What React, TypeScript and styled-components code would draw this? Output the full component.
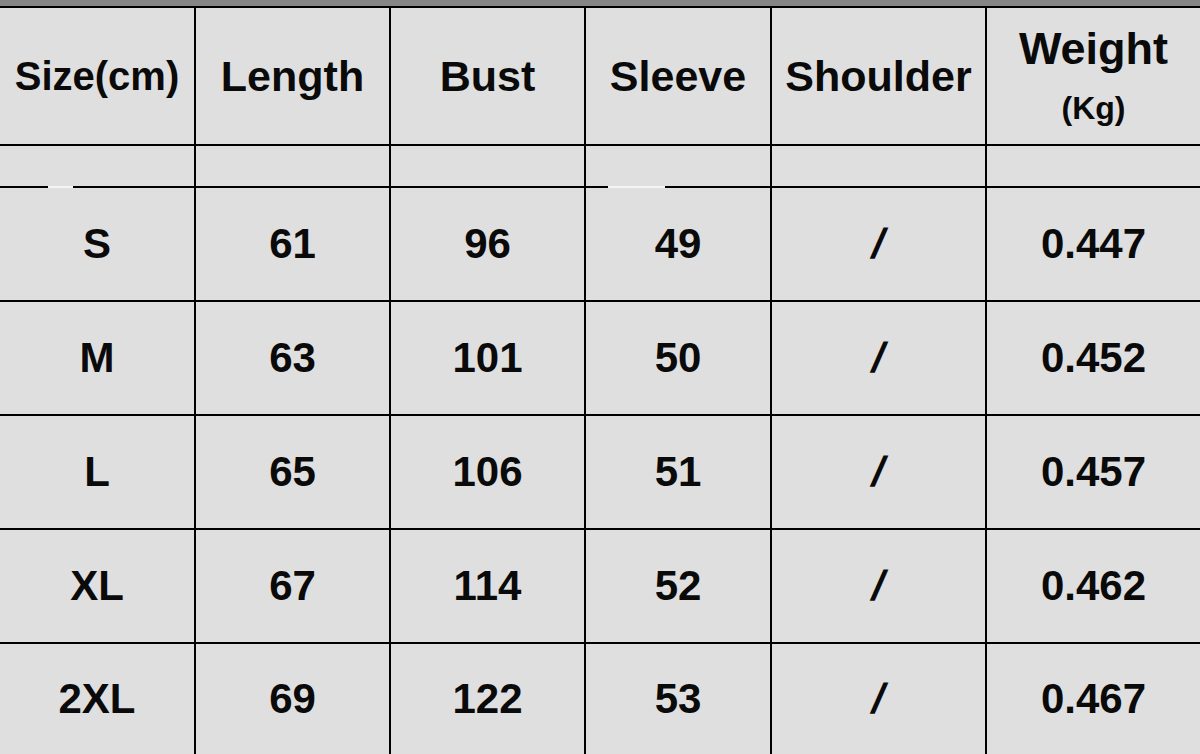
import React from "react";
import styled, { createGlobalStyle } from "styled-components";

const Global = createGlobalStyle`
  html, body { margin: 0; padding: 0; background: #dfdfdf; }
  body { font-family: "Liberation Sans", Arial, sans-serif; }
`;

const Sheet = styled.div`
  position: relative;
  width: 1200px;
  height: 754px;
  overflow: hidden;
  background: #dfdfdf;
  display: flex;
  flex-direction: column;
`;

const TopBand = styled.div`
  height: 6px;
  background: #868686;
  border-bottom: 2px solid #000;
  flex: none;
`;

const Grid = styled.div`
  flex: 1;
  display: grid;
  grid-template-columns: 194px 193px 193px 184px 213px 1fr;
  grid-template-rows: 136px 40px 112px 112px 112px 112px 1fr;
  gap: 2px;
  background: #000;
`;

const Cell = styled.div<{ $size?: number }>`
  background: #dfdfdf;
  display: flex;
  flex-direction: column;
  align-items: center;
  justify-content: center;
  color: #0a0a0a;
  font-family: "Liberation Sans", Arial, sans-serif;
  font-weight: 700;
  font-size: ${(p) => p.$size ?? 43}px;
  line-height: 1;
`;

const Main = styled.span`
  font-size: 45px;
  line-height: 1;
  transform: translateY(-3px);
`;

const Unit = styled.span`
  font-size: 32px;
  line-height: 1;
  margin-top: 18px;
`;

const Slash = styled.span`
  display: inline-block;
  transform: skewX(-14deg);
`;

const Gap = styled.div<{ $x: number; $w: number }>`
  position: absolute;
  top: 186px;
  left: ${(p) => p.$x}px;
  width: ${(p) => p.$w}px;
  height: 2px;
  background: #f4f4f4;
`;

const headers = ["Size(cm)", "Length", "Bust", "Sleeve", "Shoulder"];

const rows: string[][] = [
  ["S", "61", "96", "49", "/", "0.447"],
  ["M", "63", "101", "50", "/", "0.452"],
  ["L", "65", "106", "51", "/", "0.457"],
  ["XL", "67", "114", "52", "/", "0.462"],
  ["2XL", "69", "122", "53", "/", "0.467"],
];

export default function App() {
  return (
    <Sheet>
      <Global />
      <TopBand />
      <Grid>
        {headers.map((h) => (
          <Cell key={h} $size={h === "Size(cm)" ? 40 : 43}>
            {h}
          </Cell>
        ))}
        <Cell>
          <Main>Weight</Main>
          <Unit>(Kg)</Unit>
        </Cell>
        {headers.concat("w").map((h) => (
          <Cell key={"sp" + h} />
        ))}
        {rows.map((r) =>
          r.map((v, i) => (
            <Cell key={r[0] + i} $size={42}>
              {v === "/" ? <Slash>/</Slash> : v}
            </Cell>
          ))
        )}
      </Grid>
      <Gap $x={48} $w={25} />
      <Gap $x={608} $w={57} />
    </Sheet>
  );
}
